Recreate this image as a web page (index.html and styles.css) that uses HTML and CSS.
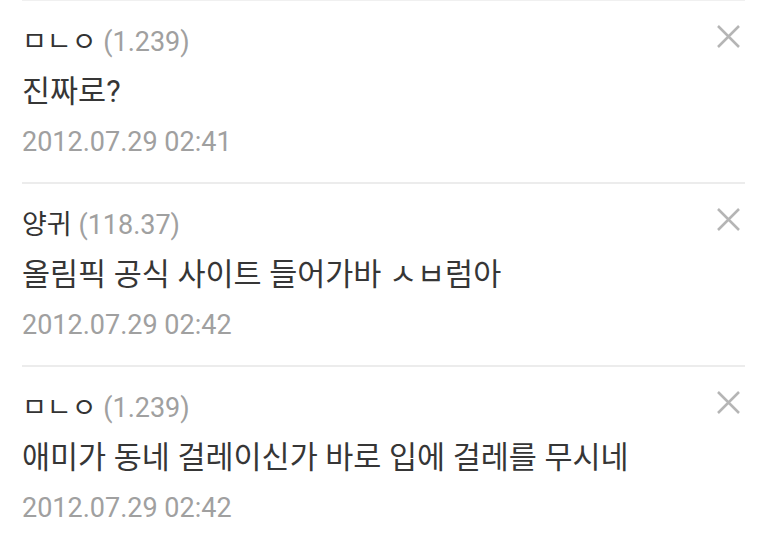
FILE: index.html
```html
<!DOCTYPE html>
<html lang="ko">
<head>
    <meta charset="UTF-8">
    <meta name="viewport" content="width=device-width, initial-scale=1.0">
    <title>댓글</title>
    <link rel="stylesheet" href="styles.css">
</head>
<body>
    <ul class="comments">
        <li class="comment">
            <div class="comment-body">
                <div class="author">ㅁㄴㅇ <span class="ip">(1.239)</span></div>
                <div class="text">진짜로?</div>
                <div class="date">2012.07.29 02:41</div>
            </div>
            <button class="remove" aria-label="삭제">
                <svg viewBox="0 0 23 23" width="23" height="23"><path d="M1 1L22 22M22 1L1 22"/></svg>
            </button>
        </li>
        <li class="comment">
            <div class="comment-body">
                <div class="author">양귀 <span class="ip">(118.37)</span></div>
                <div class="text">올림픽 공식 사이트 들어가바 ㅅㅂ럼아</div>
                <div class="date">2012.07.29 02:42</div>
            </div>
            <button class="remove" aria-label="삭제">
                <svg viewBox="0 0 23 23" width="23" height="23"><path d="M1 1L22 22M22 1L1 22"/></svg>
            </button>
        </li>
        <li class="comment">
            <div class="comment-body">
                <div class="author">ㅁㄴㅇ <span class="ip">(1.239)</span></div>
                <div class="text">애미가 동네 걸레이신가 바로 입에 걸레를 무시네</div>
                <div class="date">2012.07.29 02:42</div>
            </div>
            <button class="remove" aria-label="삭제">
                <svg viewBox="0 0 23 23" width="23" height="23"><path d="M1 1L22 22M22 1L1 22"/></svg>
            </button>
        </li>
    </ul>
</body>
</html>
```

FILE: styles.css
```css
body {
    margin: 0;
    background-color: #ffffff;
    font-family: Roboto, "Noto Sans CJK KR", sans-serif;
    color: #333333;
}
.comments {
    list-style: none;
    margin: 0 18px 0 22px;
    padding: 0;
    border-top: 1px solid #f0f0f0;
}
.comment {
    display: flex;
    justify-content: space-between;
    align-items: flex-start;
    padding: 16px 0 15px;
    border-bottom: 2px solid #ececec;
}
.comment:last-child {
    border-bottom: none;
}
.author {
    font-size: 27px;
    line-height: 50px;
    color: #333333;
}
.ip {
    color: #a0a0a0;
}
.text {
    font-size: 30.5px;
    line-height: 50px;
    color: #363636;
}
.date {
    font-size: 27px;
    line-height: 50px;
    color: #a0a0a0;
}
.remove {
    margin: 8px 5px 0 0;
    padding: 0;
    border: none;
    background: none;
    cursor: pointer;
}
.remove svg {
    display: block;
    fill: none;
    stroke: #b5b5b5;
    stroke-width: 2.5;
}
```
